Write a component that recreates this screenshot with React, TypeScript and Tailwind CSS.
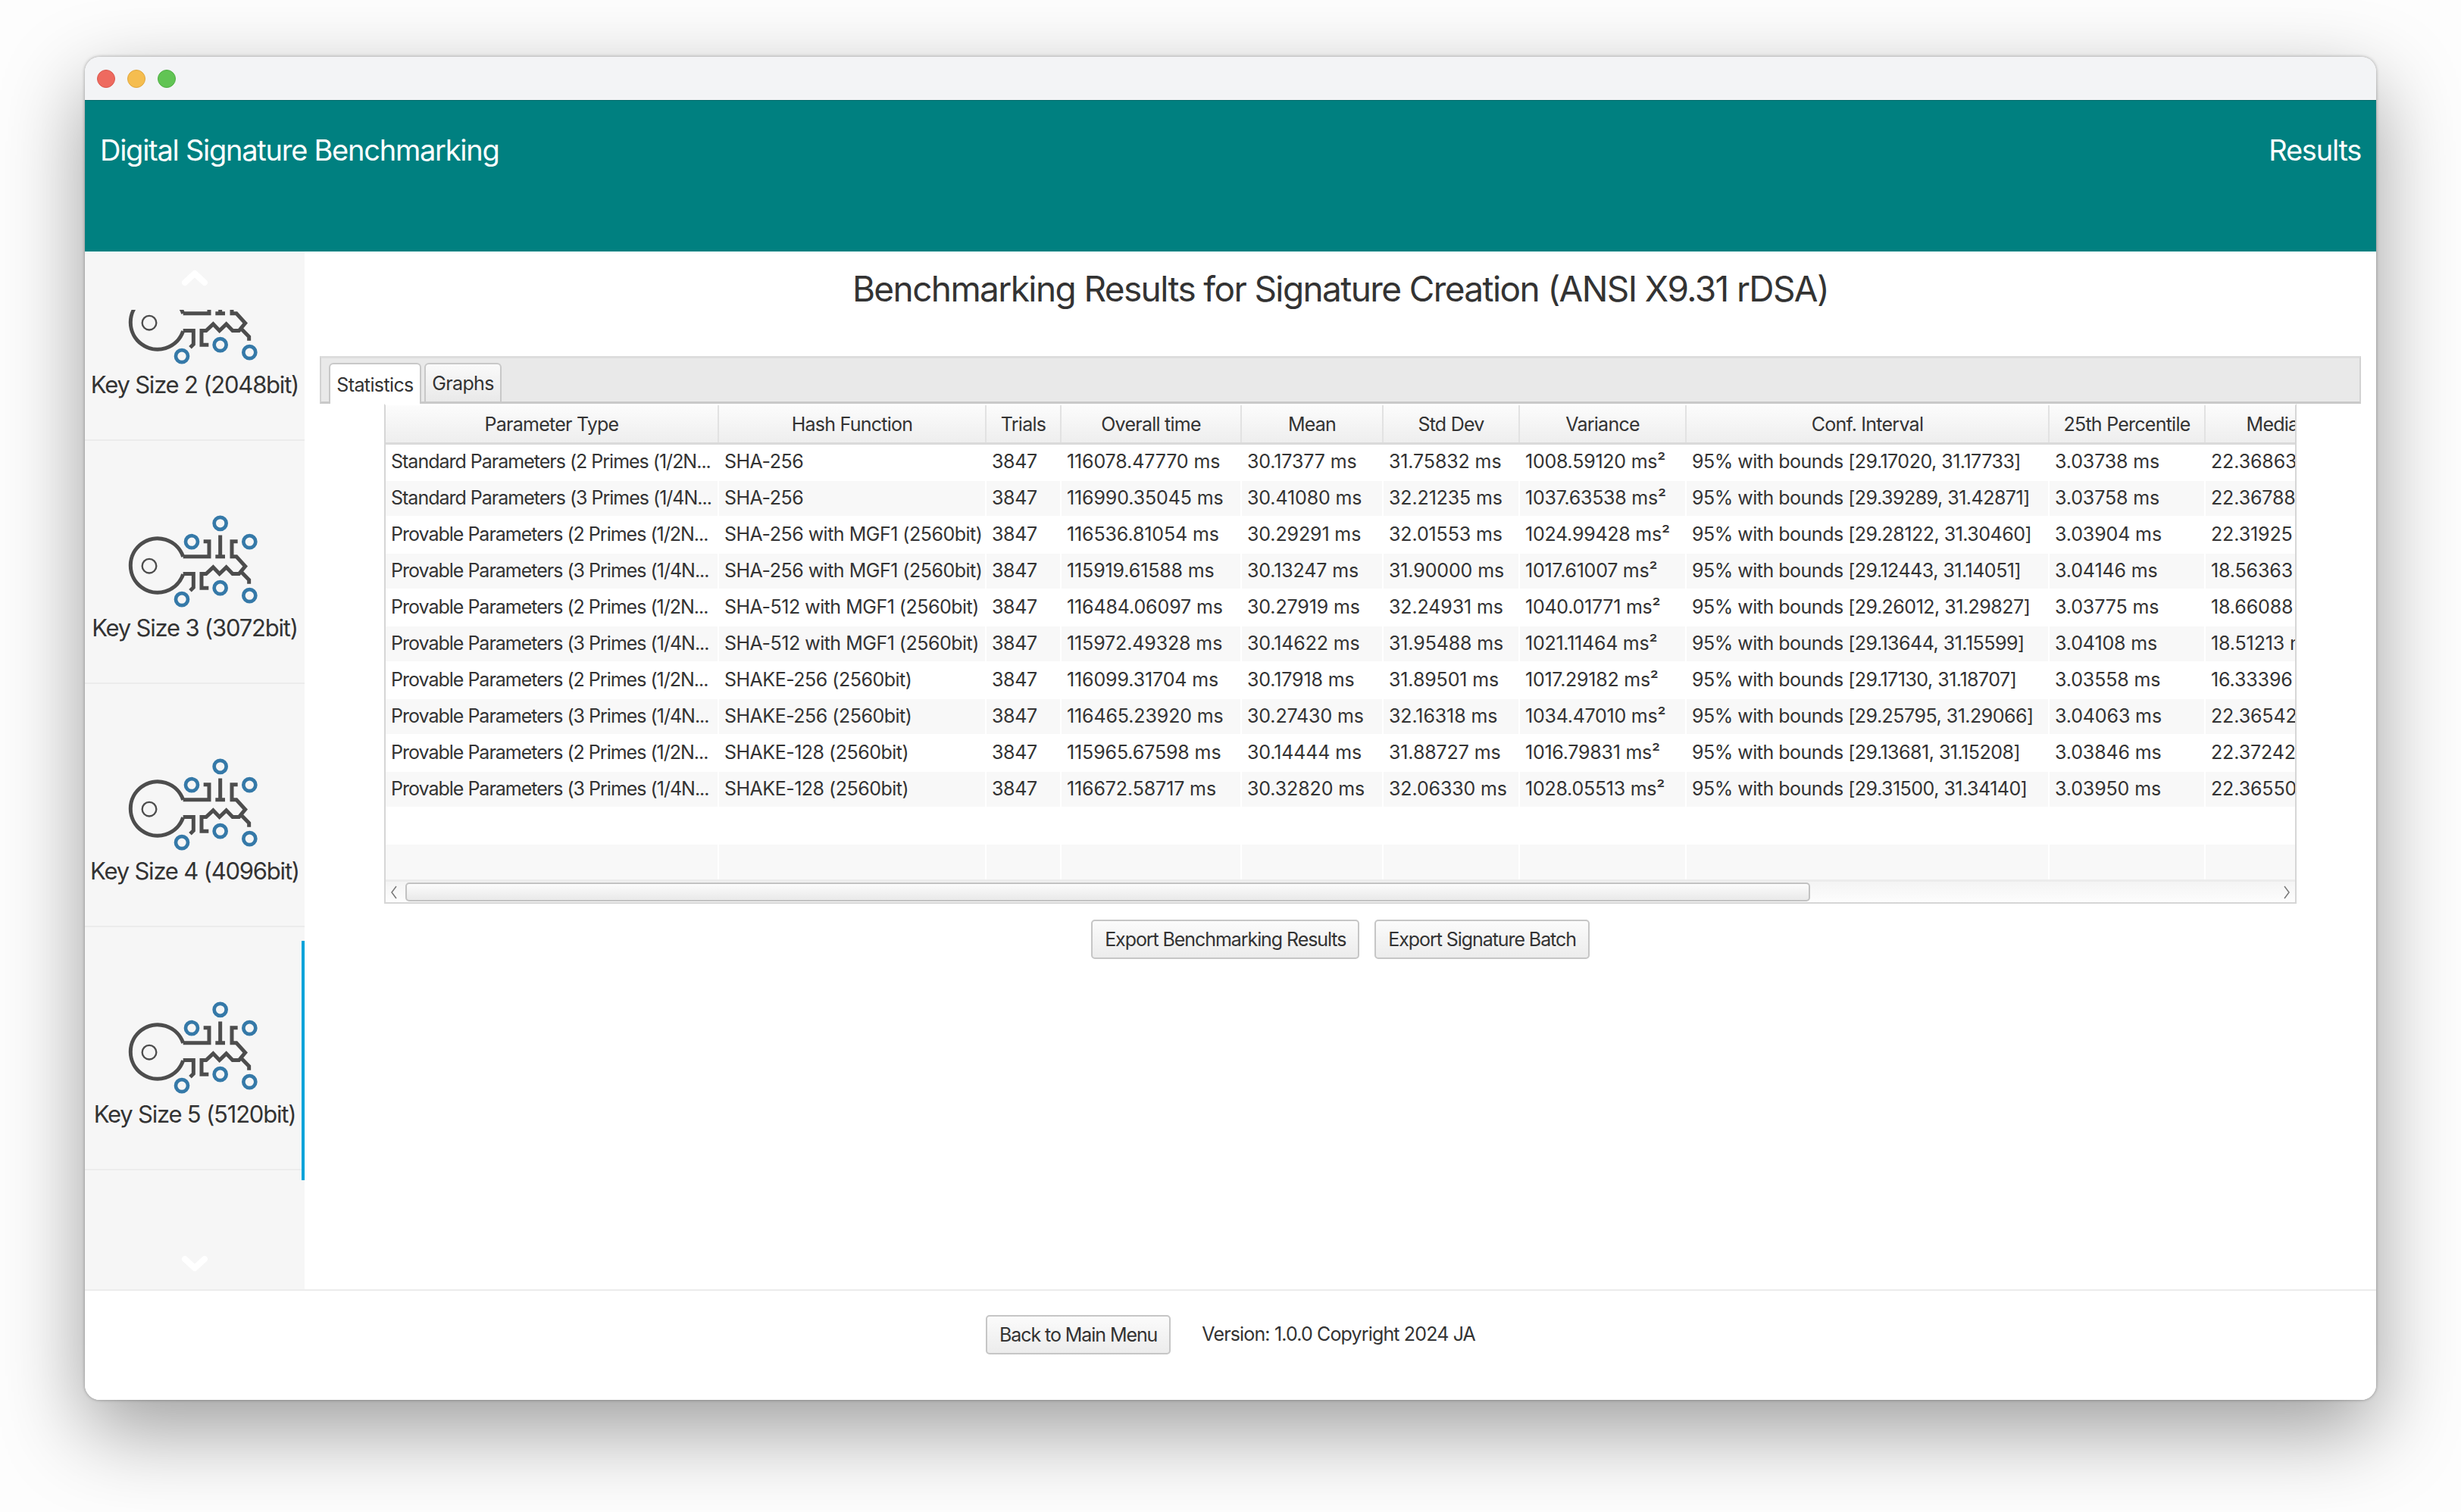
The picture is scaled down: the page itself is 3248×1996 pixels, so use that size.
const FONT = "font-['Inter',_'Liberation_Sans',_sans-serif]";

const COLUMNS = [
  "Parameter Type",
  "Hash Function",
  "Trials",
  "Overall time",
  "Mean",
  "Std Dev",
  "Variance",
  "Conf. Interval",
  "25th Percentile",
  "Median",
];

// letter spacing per column, the number columns run a bit wider than the text ones
const CELL_TRACKING = [
  "tracking-[-0.04em]",
  "tracking-[-0.02em]",
  "tracking-[-0.015em]",
  "tracking-[-0.005em]",
  "tracking-[-0.005em]",
  "tracking-[-0.005em]",
  "tracking-[-0.01em]",
  "tracking-[-0.02em]",
  "tracking-[-0.005em]",
  "tracking-[-0.005em]",
];

const GRID =
  "grid grid-cols-[440px_353px_99px_238px_187px_180px_220px_479px_206px_192px] w-[2594px]";

const P2 = "Provable Parameters (2 Primes (1/2N...";
const P3 = "Provable Parameters (3 Primes (1/4N...";
const MGF256 = "SHA-256 with MGF1 (2560bit)";
const MGF512 = "SHA-512 with MGF1 (2560bit)";

const ROWS: string[][] = [
  ["Standard Parameters (2 Primes (1/2N...", "SHA-256", "3847", "116078.47770 ms", "30.17377 ms", "31.75832 ms", "1008.59120 ms²", "95% with bounds [29.17020, 31.17733]", "3.03738 ms", "22.36863 ms"],
  ["Standard Parameters (3 Primes (1/4N...", "SHA-256", "3847", "116990.35045 ms", "30.41080 ms", "32.21235 ms", "1037.63538 ms²", "95% with bounds [29.39289, 31.42871]", "3.03758 ms", "22.36788 ms"],
  [P2, MGF256, "3847", "116536.81054 ms", "30.29291 ms", "32.01553 ms", "1024.99428 ms²", "95% with bounds [29.28122, 31.30460]", "3.03904 ms", "22.31925 ms"],
  [P3, MGF256, "3847", "115919.61588 ms", "30.13247 ms", "31.90000 ms", "1017.61007 ms²", "95% with bounds [29.12443, 31.14051]", "3.04146 ms", "18.56363 ms"],
  [P2, MGF512, "3847", "116484.06097 ms", "30.27919 ms", "32.24931 ms", "1040.01771 ms²", "95% with bounds [29.26012, 31.29827]", "3.03775 ms", "18.66088 ms"],
  [P3, MGF512, "3847", "115972.49328 ms", "30.14622 ms", "31.95488 ms", "1021.11464 ms²", "95% with bounds [29.13644, 31.15599]", "3.04108 ms", "18.51213 ms"],
  [P2, "SHAKE-256 (2560bit)", "3847", "116099.31704 ms", "30.17918 ms", "31.89501 ms", "1017.29182 ms²", "95% with bounds [29.17130, 31.18707]", "3.03558 ms", "16.33396 ms"],
  [P3, "SHAKE-256 (2560bit)", "3847", "116465.23920 ms", "30.27430 ms", "32.16318 ms", "1034.47010 ms²", "95% with bounds [29.25795, 31.29066]", "3.04063 ms", "22.36542 ms"],
  [P2, "SHAKE-128 (2560bit)", "3847", "115965.67598 ms", "30.14444 ms", "31.88727 ms", "1016.79831 ms²", "95% with bounds [29.13681, 31.15208]", "3.03846 ms", "22.37242 ms"],
  [P3, "SHAKE-128 (2560bit)", "3847", "116672.58717 ms", "30.32820 ms", "32.06330 ms", "1028.05513 ms²", "95% with bounds [29.31500, 31.34140]", "3.03950 ms", "22.36550 ms"],
];

const KEYS = ["Key Size 2 (2048bit)", "Key Size 3 (3072bit)", "Key Size 4 (4096bit)", "Key Size 5 (5120bit)"];

function KeyIcon() {
  return (
    <svg viewBox="200 360 540 380" className="w-[180px] h-[127px]" fill="none">
      <g stroke="#4d4d4d" strokeWidth="15">
        <path d="M424 530A107 107 0 1 0 424 600" />
        <path d="M424 530H527V470H505" />
        <path d="M571 445V530M552 530H590" />
        <path d="M640 470H617V530H635L670 568L645 598H620L595 572L568 598L543 572L515 598H497V654H525" />
        <path d="M652 588L685 622V638" />
        <path d="M424 598H465V652L452 665" />
        <circle cx="290" cy="567" r="28" strokeWidth="7" />
      </g>
      <g stroke="#3579a8" strokeWidth="14">
        <circle cx="571" cy="398" r="24" />
        <circle cx="458" cy="471" r="24" />
        <circle cx="687" cy="471" r="24" />
        <circle cx="571" cy="654" r="24" />
        <circle cx="419" cy="699" r="24" />
        <circle cx="687" cy="684" r="24" />
      </g>
    </svg>
  );
}

function KeyItem({ label, selected }: { label: string; selected?: boolean }) {
  return (
    <div className="relative flex flex-col items-center h-[321px] pt-[96px] border-b-2 border-[#ececec] shrink-0">
      <KeyIcon />
      <div className="mt-[4px] text-[31px] leading-[40px] tracking-[-0.039em] text-[#333] whitespace-nowrap">{label}</div>
      {selected && <div className="absolute right-0 top-[18px] w-[4px] h-[316px] bg-[#00a3d9]" />}
    </div>
  );
}

function Chevron({ up }: { up?: boolean }) {
  return (
    <svg viewBox="0 0 36 22" className="w-[36px] h-[22px]" fill="none" stroke="#fff" strokeWidth="8" strokeLinecap="round" strokeLinejoin="round">
      <path d={up ? "M5 17L18 5L31 17" : "M5 5L18 17L31 5"} />
    </svg>
  );
}

function Sidebar() {
  return (
    <div className="w-[290px] shrink-0 bg-[#f6f6f6] flex flex-col">
      <div className="h-[77px] shrink-0 flex items-start justify-center pt-[24px]">
        <Chevron up />
      </div>
      <div className="flex-1 min-h-0 overflow-hidden">
        <div className="-mt-[148px]">
          {KEYS.map((k, i) => (
            <KeyItem key={k} label={k} selected={i === 3} />
          ))}
        </div>
      </div>
      <div className="h-[45px] shrink-0 flex items-start justify-center">
        <Chevron />
      </div>
    </div>
  );
}

function Button({ children }: { children: string }) {
  return (
    <button className="h-[52px] px-[16px] pt-[2px] rounded-[5px] border-2 border-[#c6c6c6] bg-gradient-to-b from-[#fbfbfb] to-[#ececec] text-[25px] tracking-[-0.043em] text-[#333] whitespace-nowrap">
      {children}
    </button>
  );
}

function ResultsTable() {
  return (
    <div className="mx-[85px] h-[660px] border-2 border-t-white border-[#d6d6d6] flex flex-col overflow-hidden text-[#333] text-[25px] tracking-[-0.03em]">
      <div className="overflow-hidden shrink-0">
        <div className={`${GRID} h-[52px] border-b-[3px] border-[#dadada]`}>
          {COLUMNS.map((c) => (
            <div key={c} className="flex items-center justify-center pt-[2px] border-r-2 border-[#e2e2e2] bg-gradient-to-b from-[#fcfcfc] to-[#eeeeee] whitespace-nowrap">
              {c}
            </div>
          ))}
        </div>
      </div>
      <div className="flex-1 min-h-0 overflow-hidden">
        {[...ROWS, [], []].map((row, i) => (
          <div key={i} className={`${GRID} h-[48px] border-b-2 border-white ${i % 2 ? "bg-[#f8f8f8]" : "bg-white"}`}>
            {COLUMNS.map((c, j) => (
              <div
                key={c}
                className={`flex items-center pl-[7px] border-r-2 border-white whitespace-nowrap overflow-hidden ${CELL_TRACKING[j]}`}
              >
                {row[j]}
              </div>
            ))}
          </div>
        ))}
      </div>
      <div className="h-[30px] shrink-0 flex items-center gap-[2px] border-t-[3px] border-[#ececec] bg-gradient-to-b from-[#f4f4f4] to-[#fdfdfd] px-[6px]">
        <svg viewBox="0 0 10 20" className="w-[10px] h-[20px] shrink-0" fill="none" stroke="#777" strokeWidth="1.5">
          <path d="M8 2L2 10L8 18" />
        </svg>
        <div className="ml-[8px] w-[1854px] h-[25px] rounded-[5px] border-2 border-[#c2c2c2] bg-gradient-to-b from-[#fcfcfc] to-[#e9e9e9]" />
        <div className="flex-1" />
        <svg viewBox="0 0 10 20" className="w-[10px] h-[20px] shrink-0" fill="none" stroke="#777" strokeWidth="1.5">
          <path d="M2 2L8 10L2 18" />
        </svg>
      </div>
    </div>
  );
}

function Content() {
  return (
    <div className="flex-1 min-w-0 bg-white flex flex-col px-[20px]">
      <div className="h-[138px] shrink-0 pt-[23px] text-center text-[46px] leading-[52px] tracking-[-0.035em] text-[#333]">
        Benchmarking Results for Signature Creation (ANSI X9.31 rDSA)
      </div>
      <div className="h-[63px] shrink-0 bg-[#e9e9e9] border-2 border-t-[3px] border-t-[#dddddd] border-[#d2d2d2] border-b-[3px] border-b-[#c9c9c9] pl-[10px] flex items-end gap-[4px] text-[25px] tracking-[-0.025em] text-[#333]">
        <div className="relative top-[3px] h-[54px] w-[122px] pt-[3px] bg-white border-2 border-b-0 border-[#c8c8c8] rounded-t-[6px] flex items-center justify-center">
          Statistics
        </div>
        <div className="h-[51px] w-[102px] pt-[3px] bg-gradient-to-b from-[#fafafa] to-[#e9e9e9] border-2 border-b-0 border-[#c8c8c8] rounded-t-[6px] flex items-center justify-center">
          Graphs
        </div>
      </div>
      <ResultsTable />
      <div className="mt-[21px] flex justify-center gap-[20px]">
        <Button>Export Benchmarking Results</Button>
        <Button>Export Signature Batch</Button>
      </div>
    </div>
  );
}

export default function App() {
  return (
    <div className={`${FONT} w-[3248px] h-[1996px] bg-[#fdfdfd] pt-[75px] pl-[112px] overflow-hidden`}>
      <div className="w-[3024px] h-[1773px] rounded-[20px] overflow-hidden flex flex-col bg-white shadow-[0_40px_110px_rgba(0,0,0,0.38),0_0_4px_rgba(0,0,0,0.35)]">
        <div className="h-[57px] shrink-0 bg-[#f3f4f6] flex items-center gap-[16px] pl-[16px]">
          <div className="w-[24px] h-[24px] rounded-full bg-[#ee6a5f] border border-[#d9584e]" />
          <div className="w-[24px] h-[24px] rounded-full bg-[#f5bd4f] border border-[#dfa63e]" />
          <div className="w-[24px] h-[24px] rounded-full bg-[#61c454] border border-[#50ad45]" />
        </div>
        <div className="h-[200px] shrink-0 bg-[#008080] border-t border-[#006a6a] flex justify-between items-start px-[20px] pt-[40px] text-white text-[38px] leading-[50px] tracking-[-0.033em]">
          <span>Digital Signature Benchmarking</span>
          <span>Results</span>
        </div>
        <div className="flex-1 min-h-0 flex">
          <Sidebar />
          <Content />
        </div>
        <div className="h-[146px] shrink-0 border-t-2 border-[#ececec] bg-white flex items-center justify-center gap-[41px] pb-[28px] text-[25px] tracking-[-0.034em] text-[#333]">
          <Button>Back to Main Menu</Button>
          <span>Version: 1.0.0 Copyright 2024 JA</span>
        </div>
      </div>
    </div>
  );
}
